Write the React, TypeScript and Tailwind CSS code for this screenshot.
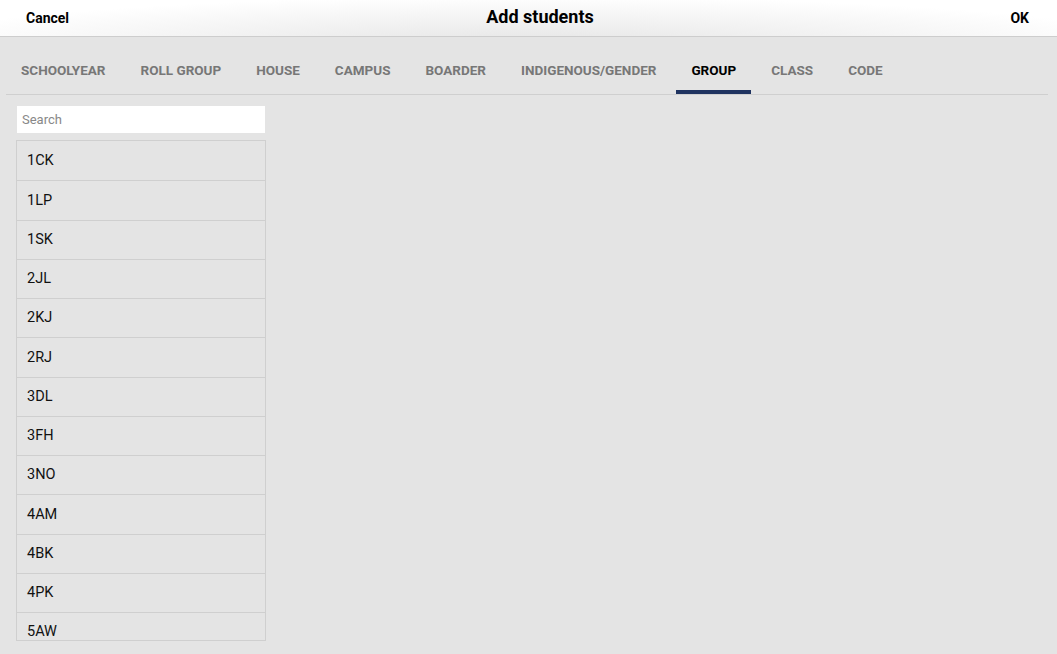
const tabs = [
  "SCHOOLYEAR",
  "ROLL GROUP",
  "HOUSE",
  "CAMPUS",
  "BOARDER",
  "INDIGENOUS/GENDER",
  "GROUP",
  "CLASS",
  "CODE",
];

const groups = [
  "1CK", "1LP", "1SK", "2JL", "2KJ", "2RJ", "3DL",
  "3FH", "3NO", "4AM", "4BK", "4PK", "5AW",
];

export default function App() {
  const active = "GROUP";

  return (
    <div className="w-[1057px] h-[654px] overflow-hidden bg-[#e4e4e4] font-['Roboto','Liberation_Sans',sans-serif] flex flex-col">
      {/* Header bar */}
      <header className="h-[37px] shrink-0 border-b border-[#cdcdcd] bg-[radial-gradient(ellipse_60%_140%_at_50%_130%,#e4e4e4,#ffffff)] grid grid-cols-[1fr_auto_1fr] items-center px-[26px]">
        <div>
          <button className="text-[14px] font-bold text-black">Cancel</button>
        </div>
        <div className="text-[18px] font-bold text-black -mt-[4px] ml-[23px]">Add students</div>
        <div className="flex justify-end">
          <button className="text-[14px] font-bold text-black mr-[2px]">OK</button>
        </div>
      </header>

      {/* Tabs */}
      <nav className="mx-[6px] mr-[9px] mt-[9px] border-b border-[#cfcfcf] flex gap-[5px]">
        {tabs.map((t) => (
          <div
            key={t}
            className={
              t === active
                ? "h-[48px] px-[15px] flex items-center text-[13.5px] font-bold text-black border-b-[4px] border-[#1f3360] pt-[4px]"
                : "h-[48px] px-[15px] flex items-center text-[13.5px] font-bold text-[#777777] border-b-[4px] border-transparent pt-[4px]"
            }
          >
            {t}
          </div>
        ))}
      </nav>

      {/* Search + list */}
      <div className="pl-[16px] pt-[11px] flex flex-col">
        <input
          placeholder="Search"
          className="ml-[1px] w-[248px] h-[27px] bg-white px-[5px] text-[13px] text-[#333] placeholder:text-[#888] outline-none"
        />
        <div className="mt-[7px] w-[250px] h-[501px] overflow-hidden border border-[#cfcfcf]">
          {groups.map((g, i) => (
            <div
              key={g}
              className={
                i === 0
                  ? "h-[39.25px] flex items-center pl-[10px] text-[14.5px] text-[#111]"
                  : "h-[39.25px] flex items-center pl-[10px] text-[14.5px] text-[#111] border-t border-[#cfcfcf]"
              }
            >
              {g}
            </div>
          ))}
        </div>
      </div>
    </div>
  );
}
